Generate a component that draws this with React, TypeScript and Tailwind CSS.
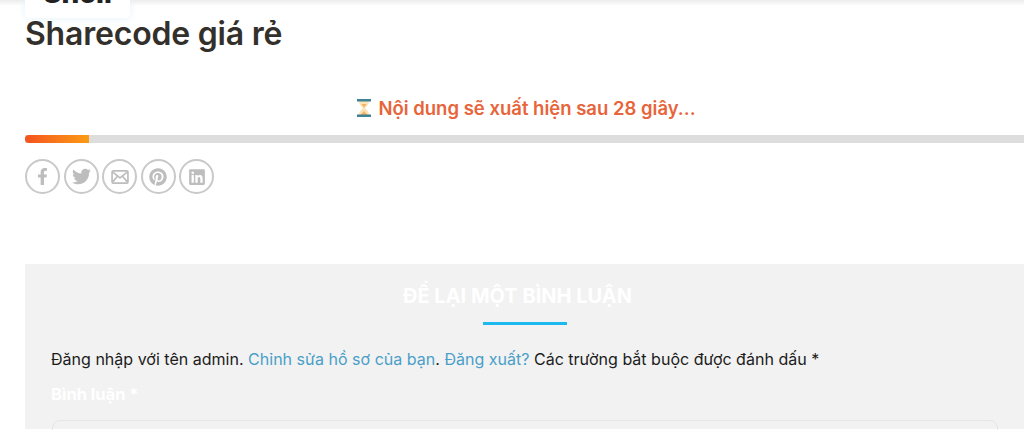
import { FaFacebookF, FaTwitter, FaPinterest, FaLinkedin } from "react-icons/fa";
import type { ReactNode } from "react";

const font = { fontFamily: '"Inter", "Noto Sans", sans-serif' };

function Circle({ children }: { children: ReactNode }) {
  return (
    <div className="flex h-[35px] w-[35px] shrink-0 items-center justify-center rounded-full border-2 border-[#c9c9c9] text-[#bdbdbd]">
      {children}
    </div>
  );
}

function Envelope() {
  return (
    <svg width="18" height="14" viewBox="0 0 19 15" fill="none" stroke="#bdbdbd" strokeWidth="1.8">
      <rect x="1" y="1" width="17" height="13" rx="1.2" />
      <path d="M1.5 2l8 6.5 8-6.5M1.5 13l5.5-6.5M17.5 13L12 6.5" />
    </svg>
  );
}

function Hourglass() {
  return (
    <svg width="16" height="20" viewBox="0 0 16 20" className="shrink-0">
      <path d="M3 3h10c0 4-3 5.500-4 7 1 1.500 4 3 4 7H3c0-4 3-5.500 4-7-1-1.500-4-3-4-7z" fill="#fbe3b5" />
      <path d="M4.500 17l3.500-4 3.500 4z" fill="#f3b35f" />
      <path d="M5.500 6h5L8 9.500z" fill="#f3b35f" />
      <rect x="1" y="1" width="14" height="2.500" fill="#3f8296" />
      <rect x="1" y="16.500" width="14" height="2.500" fill="#3f8296" />
    </svg>
  );
}

export default function App() {
  return (
    <div className="relative h-[430px] w-[1024px] overflow-hidden bg-white" style={font}>
      <div className="absolute inset-x-0 top-0 h-[6px] bg-gradient-to-b from-[#ececec] to-white" />
      <div className="absolute left-[25px] top-0 h-[18px] w-[105px] overflow-hidden rounded-b-[4px] bg-white shadow-[0_0_8px_#e3f2fa]">
        <div className="mt-[-21px] pl-[18px] text-[28px] font-extrabold leading-[28px] text-[#222]">Shell</div>
      </div>

      <div className="relative pl-[25px]">
        <h1 className="pt-[15px] text-[32px] font-semibold leading-[38px] tracking-[-0.2px] text-[#33302c]">Sharecode giá rẻ</h1>

        <div className="mt-[43px] flex h-[24px] w-[1002px] items-center justify-center gap-[6px] text-[18.500px] font-semibold leading-[24px] text-[#e8643a]">
          <Hourglass />
          <span>Nội dung sẽ xuất hiện sau 28 giây...</span>
        </div>

        <div className="mt-[15px] h-[8px] w-[999px] bg-[#dddddd]">
          <div className="h-full w-[64px] rounded-l-full bg-gradient-to-r from-[#f4511e] to-[#fb9a14]" />
        </div>

        <div className="mt-[16px] flex gap-[3.5px]">
          <Circle><FaFacebookF size={17} /></Circle>
          <Circle><FaTwitter size={19} /></Circle>
          <Circle><Envelope /></Circle>
          <Circle><FaPinterest size={18} /></Circle>
          <Circle><FaLinkedin size={18} /></Circle>
        </div>

        <div className="mt-[70px] h-[165px] w-[999px] bg-[#f2f2f2] pl-[26px] pr-[26px]">
          <div className="pr-[14px] pt-[20px] text-center text-[20px] font-bold leading-[24px] text-white">ĐỂ LẠI MỘT BÌNH LUẬN</div>
          <div className="ml-[432px] mt-[13px] h-[3px] w-[84px] translate-y-[1px] bg-[#1cb9ee]" />
          <p className="mt-[24px] text-[16.050px] leading-[22px] text-[#1c1c1c]">
            Đăng nhập với tên admin. <span className="text-[#4a9fc8]">Chỉnh sửa hồ sơ của bạn</span>. <span className="text-[#4a9fc8]">Đăng xuất?</span> Các trường bắt buộc được đánh dấu *
          </p>
          <div className="mt-[13px] text-[16.500px] font-bold leading-[22px] text-white">Bình luận *</div>
          <div className="ml-[1px] mt-[15px] h-[40px] rounded-[8px] border border-[#e6e6e6]" />
        </div>
      </div>
    </div>
  );
}
